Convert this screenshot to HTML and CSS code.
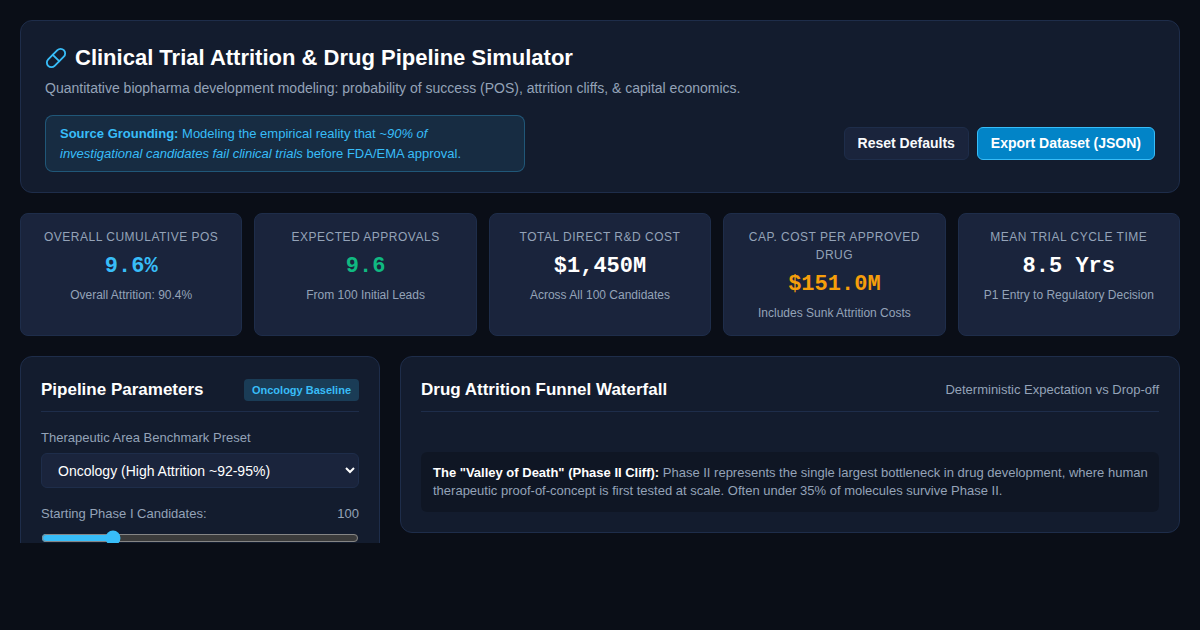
FILE: index.html
```html
<!DOCTYPE html>
<html lang="en">

<head>
<meta charset="utf-8">
<meta name="viewport" content="width=device-width, initial-scale=1">
<title>Clinical Trial Attrition & Drug Pipeline Simulator</title>
<link rel="stylesheet" href="styles.css">
</head>

<body>
<div class="page">

<header class="header">
<h1>
<svg class="logo" viewBox="0 0 24 24" fill="none" stroke="currentColor" stroke-width="2" stroke-linecap="round" stroke-linejoin="round" aria-hidden="true">
<path d="m10.5 20.5 10-10a4.95 4.95 0 1 0-7-7l-10 10a4.95 4.95 0 1 0 7 7Z"/>
<path d="m8.5 8.5 7 7"/>
</svg>
Clinical Trial Attrition &amp; Drug Pipeline Simulator
</h1>
<p class="subtitle">Quantitative biopharma development modeling: probability of success (POS), attrition cliffs, &amp; capital economics.</p>

<div class="header-row">
<div class="grounding">
<strong>Source Grounding:</strong> Modeling the empirical reality that <em>~90% of investigational candidates fail clinical trials</em> before FDA/EMA approval.
</div>
<div class="actions">
<button type="button" class="btn">Reset Defaults</button>
<button type="button" class="btn primary">Export Dataset (JSON)</button>
</div>
</div>
</header>

<section class="kpis">
<div class="kpi">
<div class="kpi-label">Overall Cumulative POS</div>
<div class="kpi-value blue">9.6%</div>
<div class="kpi-sub">Overall Attrition: 90.4%</div>
</div>
<div class="kpi">
<div class="kpi-label">Expected Approvals</div>
<div class="kpi-value green">9.6</div>
<div class="kpi-sub">From 100 Initial Leads</div>
</div>
<div class="kpi">
<div class="kpi-label">Total Direct R&amp;D Cost</div>
<div class="kpi-value">$1,450M</div>
<div class="kpi-sub">Across All 100 Candidates</div>
</div>
<div class="kpi">
<div class="kpi-label">Cap. Cost Per Approved Drug</div>
<div class="kpi-value amber">$151.0M</div>
<div class="kpi-sub">Includes Sunk Attrition Costs</div>
</div>
<div class="kpi">
<div class="kpi-label">Mean Trial Cycle Time</div>
<div class="kpi-value">8.5 Yrs</div>
<div class="kpi-sub">P1 Entry to Regulatory Decision</div>
</div>
</section>

<main class="workspace">
<section class="panel">
<div class="panel-head">
<h2>Pipeline Parameters</h2>
<span class="badge">Oncology Baseline</span>
</div>

<div class="field">
<label for="preset">Therapeutic Area Benchmark Preset</label>
<select id="preset">
<option>Oncology (High Attrition ~92-95%)</option>
</select>
</div>

<div class="field">
<div class="field-row">
<label for="candidates">Starting Phase I Candidates:</label>
<output id="candidates-value" for="candidates">100</output>
</div>
<input type="range" id="candidates" min="20" max="400" value="100">
</div>
</section>

<section class="panel">
<div class="panel-head">
<h2>Drug Attrition Funnel Waterfall</h2>
<span class="note">Deterministic Expectation vs Drop-off</span>
</div>
<div class="funnel"></div>
<div class="callout">
<strong>The "Valley of Death" (Phase II Cliff):</strong> Phase II represents the single largest bottleneck in drug development, where human therapeutic proof-of-concept is first tested at scale. Often under 35% of molecules survive Phase II.
</div>
</section>
</main>

</div>
<script>
const candidates = document.querySelector('#candidates');
const candidatesValue = document.querySelector('#candidates-value');

candidates.addEventListener('input', () => {
	candidatesValue.textContent = candidates.value;
});
</script>
</body>
</html>
```
FILE: styles.css
```css
:root {
    --bg: #0a0e17;
    --panel: #131c2e;
    --card: #1a243c;
    --border: #1e2d4a;
    --text: #f8fafc;
    --muted: #94a3b8;
    --blue: #38bdf8;
}

* {
    box-sizing: border-box;
    margin: 0;
}

body {
    background: var(--bg);
    color: var(--text);
    font-family: "Liberation Sans", Arial, sans-serif;
    font-size: 13px;
    line-height: 1.5;
}

.page {
    display: flex;
    flex-direction: column;
    gap: 20px;
    height: 100vh;
    padding: 20px 20px 87px;
}

.header {
    padding: 20px 24px;
    background: var(--panel);
    border: 1px solid var(--border);
    border-radius: 12px;
}

h1 {
    display: flex;
    align-items: center;
    gap: 8px;
    color: #fff;
    font-size: 22px;
    line-height: 33px;
}

.logo {
    width: 22px;
    height: 22px;
    color: var(--blue);
}

.subtitle {
    margin-top: 4px;
    color: var(--muted);
    font-size: 14px;
    line-height: 21px;
}

.header-row {
    display: flex;
    align-items: center;
    justify-content: space-between;
    gap: 16px;
    margin-top: 16px;
}

.grounding {
    max-width: 480px;
    padding: 8px 14px;
    background: rgba(56, 189, 248, 0.1);
    border: 1px solid rgba(56, 189, 248, 0.3);
    border-radius: 8px;
    color: var(--blue);
}

.actions {
    display: flex;
    gap: 8px;
}

.btn {
    padding: 8px 13px;
    background: var(--card);
    border: 1px solid var(--border);
    border-radius: 6px;
    color: var(--text);
    font: bold 14px/15px "Liberation Sans", Arial, sans-serif;
    cursor: pointer;
}

.btn.primary {
    background: #0284c7;
    border-color: var(--blue);
    color: #fff;
}

.kpis {
    display: grid;
    grid-template-columns: repeat(5, 1fr);
    gap: 12px;
}

.kpi {
    padding: 14px;
    background: var(--card);
    border: 1px solid var(--border);
    border-radius: 8px;
    text-align: center;
}

.kpi-label {
    color: var(--muted);
    font-size: 12px;
    line-height: 18px;
    letter-spacing: 0.5px;
    text-transform: uppercase;
}

.kpi-value {
    margin: 4px 0;
    color: #fff;
    font-family: "Liberation Mono", "Courier New", monospace;
    font-size: 22px;
    font-weight: bold;
    line-height: 33px;
}

.kpi-value.blue { color: var(--blue); }
.kpi-value.green { color: #10b981; }
.kpi-value.amber { color: #f59e0b; }

.kpi-sub {
    color: var(--muted);
    font-size: 12px;
    line-height: 16px;
}

/* the columns fill what is left of the window */
.workspace {
    flex: 1;
    display: grid;
    grid-template-columns: 360px 1fr;
    gap: 20px;
    align-items: start;
    min-height: 0;
    overflow: hidden;
}

.panel {
    display: flex;
    flex-direction: column;
    padding: 20px;
    background: var(--panel);
    border: 1px solid var(--border);
    border-radius: 12px;
}

.panel-head {
    display: flex;
    align-items: center;
    justify-content: space-between;
    margin-bottom: 16px;
    padding-bottom: 9px;
    border-bottom: 1px solid var(--border);
}

h2 {
    color: #fff;
    font-size: 17px;
    line-height: 25px;
}

.badge {
    padding: 2px 8px;
    background: rgba(56, 189, 248, 0.2);
    border-radius: 4px;
    color: var(--blue);
    font-size: 11px;
    font-weight: bold;
    line-height: 18px;
}

.note, label, output {
    color: var(--muted);
    line-height: 19px;
}

.field {
    margin-bottom: 16px;
}

.field label {
    display: block;
}

.field-row {
    display: flex;
    justify-content: space-between;
}

select {
    width: 100%;
    height: 35px;
    margin-top: 6px;
    padding: 0 12px;
    background: var(--card);
    border: 1px solid var(--border);
    border-radius: 6px;
    color: #fff;
    font: 14px "Liberation Sans", Arial, sans-serif;
}

input[type="range"] {
    display: block;
    width: 100%;
    margin-top: 7px;
    accent-color: var(--blue);
}

.funnel {
    margin-bottom: 24px;
}

.callout {
    padding: 12px 8px 12px 12px;
    background: rgba(0, 0, 0, 0.2);
    border-radius: 6px;
    color: var(--muted);
    line-height: 18px;
}

.callout strong {
    color: #fff;
}
```
